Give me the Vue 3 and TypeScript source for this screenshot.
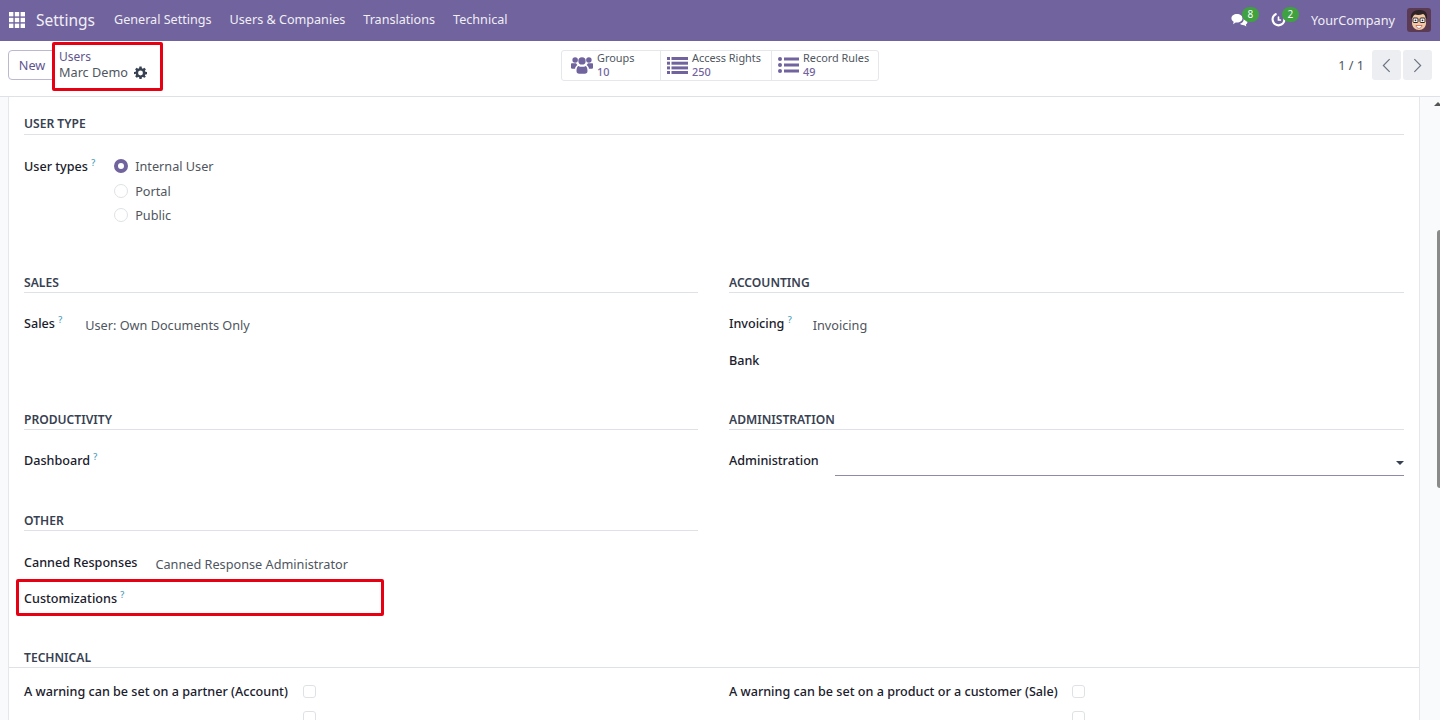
<script setup lang="ts">
const navItems = ['General Settings', 'Users & Companies', 'Translations', 'Technical'];
const userTypes = ['Internal User', 'Portal', 'Public'];
</script>

<template>
	<div class="page">
		<header class="navbar">
			<svg class="apps" viewBox="0 0 16 16" width="16" height="16">
				<g fill="#fff">
					<rect x="0" y="0" width="4.4" height="4.4" /><rect x="5.8" y="0" width="4.4" height="4.4" /><rect x="11.6" y="0" width="4.4" height="4.4" />
					<rect x="0" y="5.8" width="4.4" height="4.4" /><rect x="5.8" y="5.8" width="4.4" height="4.4" /><rect x="11.6" y="5.8" width="4.4" height="4.4" />
					<rect x="0" y="11.6" width="4.4" height="4.4" /><rect x="5.8" y="11.6" width="4.4" height="4.4" /><rect x="11.6" y="11.6" width="4.4" height="4.4" />
				</g>
			</svg>
			<span class="brand">Settings</span>
			<nav class="menu">
				<span v-for="item in navItems" :key="item">{{ item }}</span>
			</nav>
			<div class="systray">
				<div class="tray-icon chat">
					<svg viewBox="0 0 20 16" width="17" height="14">
						<path fill="#fff" d="M7 1c3.700 0 6.500 2.200 6.500 5S10.700 11 7 11l-1.500-.1L2.500 13l.6-3C1.500 9.100.5 7.700.5 6 .5 3.200 3.300 1 7 1z" />
						<path fill="#fff" d="M15 6.500c2.500.4 4.300 2 4.300 3.900 0 1.200-.7 2.300-1.800 3l.5 2.300-2.500-1.600c-2 .1-3.800-.5-4.800-1.700 2.600-.6 4.500-3 4.300-5.900z" />
					</svg>
					<span class="badge">8</span>
				</div>
				<div class="tray-icon clock">
					<svg viewBox="0 0 16 16" width="15" height="15">
						<path fill="none" stroke="#fff" stroke-width="2.400" stroke-linecap="round" d="M5 2.300A6.300 6.300 0 1 0 14.300 8" />
						<path fill="none" stroke="#fff" stroke-width="1.800" stroke-linecap="round" d="M8 5.500v3h2" />
					</svg>
					<span class="badge">2</span>
				</div>
				<span class="company">YourCompany</span>
				<svg class="avatar" viewBox="0 0 24 24" width="24" height="24">
					<rect width="24" height="24" rx="3" fill="#5b3a54" />
					<path fill="#f2c9a5" d="M5 10c0-4 3-6 7-6s7 2 7 6v5c0 4-3 7-7 7s-7-3-7-7z" />
					<path fill="#2e2326" d="M4 11c-1-6 3-9 8-9 5-.5 9 2 8 9l-1.500-1c0-2-1-3.500-2.500-4-3 1.200-6 1.200-8 .5C6.500 7.500 5.500 9 5.500 10z" />
					<g fill="#fff" stroke="#2e2326" stroke-width="1">
						<rect x="6" y="10" width="5" height="4.500" rx="1" />
						<rect x="13" y="10" width="5" height="4.500" rx="1" />
					</g>
					<circle cx="8.500" cy="12.300" r=".9" fill="#2e2326" />
					<circle cx="15.500" cy="12.300" r=".9" fill="#2e2326" />
					<path fill="#fff" stroke="#a33" stroke-width=".6" d="M9 17.500h6c-.5 2-1.700 2.800-3 2.800s-2.500-.8-3-2.800z" />
				</svg>
			</div>
		</header>

		<section class="control-panel">
			<div class="cp-left">
				<button class="btn-new">New</button>
				<div class="breadcrumb">
					<span class="crumb-link">Users</span>
					<span class="crumb-current">
						Marc Demo
						<svg viewBox="0 0 24 24" width="13" height="13">
							<path fill="#374151" fill-rule="evenodd" d="M10 1h4l.6 3.100 1.800.8L19 3.100 21.900 6l-1.800 2.600.8 1.800L24 11v4l-3.100.5-.8 1.900 1.800 2.600L19 21.900l-2.600-1.800-1.800.8L14 24h-4l-.6-3.100-1.800-.8L5 21.900 2.100 19l1.800-2.600-.8-1.900L0 15v-4l3.100-.6.800-1.800L2.100 6 5 3.100l2.600 1.800 1.800-.8zM12 8.500a4.500 4.500 0 1 0 0 9 4.500 4.500 0 0 0 0-9z" />
						</svg>
					</span>
				</div>
			</div>
			<div class="stats">
				<div class="stat stat-groups">
					<svg viewBox="0 0 24 19" width="22" height="18">
						<g fill="#71639e">
							<circle cx="4.500" cy="4" r="3" /><circle cx="19.500" cy="4" r="3" /><circle cx="12" cy="5" r="4" />
							<path d="M0 8.500c0-.6.500-1 1-1h4.500c.5 1 1 1.500 1.500 2-1.600 1-2.500 2.500-2.600 4H1c-.6 0-1-.5-1-1z" />
							<path d="M24 8.500c0-.6-.5-1-1-1h-4.500c-.5 1-1 1.500-1.500 2 1.600 1 2.500 2.500 2.600 4H23c.6 0 1-.5 1-1z" />
							<path d="M8 10.500c2 1.300 6 1.300 8 0 1.500 1 2 3 2 5.500 0 2-1 3-3 3H9c-2 0-3-1-3-3 0-2.500.5-4.500 2-5.500z" />
						</g>
					</svg>
					<div class="stat-text"><span class="stat-label">Groups</span><span class="stat-value">10</span></div>
				</div>
				<div class="stat stat-access">
					<svg viewBox="0 0 21 17" width="21" height="17">
						<g fill="#71639e">
							<rect y="0" width="3" height="3" /><rect x="4.500" y="0" width="16.500" height="3" />
							<rect y="4.700" width="3" height="3" /><rect x="4.500" y="4.700" width="16.500" height="3" />
							<rect y="9.400" width="3" height="3" /><rect x="4.500" y="9.400" width="16.500" height="3" />
							<rect y="14" width="3" height="3" /><rect x="4.500" y="14" width="16.500" height="3" />
						</g>
					</svg>
					<div class="stat-text"><span class="stat-label">Access Rights</span><span class="stat-value">250</span></div>
				</div>
				<div class="stat stat-rules">
					<svg viewBox="0 0 21 16" width="21" height="16">
						<g fill="#71639e">
							<circle cx="2" cy="2" r="2" /><rect x="6" y=".5" width="15" height="3" />
							<circle cx="2" cy="8" r="2" /><rect x="6" y="6.500" width="15" height="3" />
							<circle cx="2" cy="14" r="2" /><rect x="6" y="12.500" width="15" height="3" />
						</g>
					</svg>
					<div class="stat-text"><span class="stat-label">Record Rules</span><span class="stat-value">49</span></div>
				</div>
			</div>
			<div class="pager">
				<span class="pager-count">1 / 1</span>
				<div class="pager-btns">
					<button class="pager-btn">
						<svg viewBox="0 0 10 16" width="9" height="15"><path fill="none" stroke="#6b7280" stroke-width="1.300" d="M8.500 1 1.500 8l7 7" /></svg>
					</button>
					<button class="pager-btn">
						<svg viewBox="0 0 10 16" width="9" height="15"><path fill="none" stroke="#6b7280" stroke-width="1.300" d="m1.500 1 7 7-7 7" /></svg>
					</button>
				</div>
			</div>
		</section>

		<main class="content">
			<div class="sheet">
				<h3 class="section-title user-type-title">USER TYPE</h3>
				<div class="user-types">
					<span class="label">User types <sup class="help">?</sup></span>
					<div class="radios">
						<div v-for="(type, i) in userTypes" :key="type" class="radio-row">
							<span :class="['radio', i === 0 ? 'checked' : '']"></span>
							<span class="value">{{ type }}</span>
						</div>
					</div>
				</div>

				<div class="two-cols sales-row">
					<div class="col">
						<h3 class="section-title">SALES</h3>
						<div class="field first-field">
							<span class="label">Sales <sup class="help">?</sup></span>
							<span class="value sales-value">User: Own Documents Only</span>
						</div>
					</div>
					<div class="col">
						<h3 class="section-title">ACCOUNTING</h3>
						<div class="field first-field">
							<span class="label">Invoicing <sup class="help">?</sup></span>
							<span class="value invoicing-value">Invoicing</span>
						</div>
						<div class="field bank-field"><span class="label">Bank</span></div>
					</div>
				</div>

				<div class="two-cols productivity-row">
					<div class="col">
						<h3 class="section-title">PRODUCTIVITY</h3>
						<div class="field first-field">
							<span class="label">Dashboard <sup class="help">?</sup></span>
						</div>
					</div>
					<div class="col">
						<h3 class="section-title">ADMINISTRATION</h3>
						<div class="field first-field">
							<span class="label">Administration</span>
							<div class="select"><span class="caret"></span></div>
						</div>
					</div>
				</div>

				<div class="two-cols other-row">
					<div class="col">
						<h3 class="section-title">OTHER</h3>
						<div class="field canned-field">
							<span class="label">Canned Responses</span>
							<span class="value canned-value">Canned Response Administrator</span>
						</div>
						<div class="field custom-field">
							<span class="label">Customizations <sup class="help">?</sup></span>
							<span class="red-box custom-box"></span>
						</div>
					</div>
					<div class="col"></div>
				</div>

				<h3 class="section-title technical-title">TECHNICAL</h3>
				<div class="two-cols check-row">
					<div class="check-field">
						<span class="label check-label">A warning can be set on a partner (Account)</span>
						<span class="checkbox"></span>
					</div>
					<div class="check-field">
						<span class="label check-label">A warning can be set on a product or a customer (Sale)</span>
						<span class="checkbox"></span>
					</div>
				</div>
				<div class="two-cols check-row clipped-row">
					<div class="check-field"><span class="check-label blank"></span><span class="checkbox"></span></div>
					<div class="check-field"><span class="check-label blank"></span><span class="checkbox"></span></div>
				</div>
			</div>
			<div class="scrollbar">
				<span class="scroll-arrow"></span>
				<span class="scroll-thumb"></span>
			</div>
		</main>
	</div>
</template>

<style>
html,
body {
	margin: 0;
	overflow: hidden;
}
</style>

<style scoped>
.page {
	width: 1440px;
	height: 720px;
	overflow: hidden;
	display: flex;
	flex-direction: column;
	background: #fff;
	font-family: "Noto Sans", "Open Sans", sans-serif;
	font-size: 12.7px;
	color: #374151;
}

.navbar {
	height: 41px;
	flex: none;
	display: flex;
	align-items: center;
	box-sizing: border-box;
	padding: 0 9px 2px 9px;
	background: #71639e;
	color: #fff;
}

.brand {
	margin-left: 11px;
	font-size: 15.5px;
	opacity: 0.9;
}

.menu {
	display: flex;
	gap: 18px;
	margin-left: 19px;
	font-size: 12.6px;
	opacity: 0.9;
}

.systray {
	margin-left: auto;
	display: flex;
	align-items: center;
}

.tray-icon {
	position: relative;
	display: flex;
	align-items: center;
	height: 24px;
}

.chat {
	margin-right: 23px;
}

.clock {
	margin-right: 25px;
}

.badge {
	position: absolute;
	top: -1px;
	left: 11px;
	width: 17px;
	height: 15px;
	border-radius: 8px;
	background: #3fa140;
	font-size: 10px;
	line-height: 15px;
	text-align: center;
}

.company {
	font-size: 12.7px;
	opacity: 0.9;
}

.avatar {
	margin: 1px 0 0 12px;
}

.control-panel {
	height: 56px;
	flex: none;
	display: grid;
	grid-template-columns: 1fr auto 1fr;
	grid-template-rows: 48px;
	align-items: center;
	padding: 0 8px 7px 8px;
	border-bottom: 1px solid #dee2e6;
	box-sizing: border-box;
}

.cp-left {
	display: flex;
	align-items: center;
	height: 48px;
}

.btn-new {
	width: 48px;
	height: 30px;
	padding: 0;
	border: 1px solid #bdb8cf;
	border-radius: 4px;
	background: #fff;
	color: #5f5590;
	font: inherit;
}

.breadcrumb {
	display: flex;
	flex-direction: column;
	flex: none;
	width: 111px;
	height: 49px;
	margin: 3px 0 0 -4px;
	padding: 4px 0 0 4px;
	box-sizing: border-box;
	border: 3px solid #e60012;
	border-radius: 2px;
	background: #fff;
	line-height: 15.5px;
}

.crumb-link {
	color: #5f5590;
	font-size: 12px;
}

.crumb-current {
	display: flex;
	align-items: center;
	gap: 6px;
	color: #4f5660;
}

.stats {
	display: flex;
	height: 31px;
	border: 1px solid #e5e7eb;
	border-radius: 3px;
	box-sizing: border-box;
}

.stat {
	display: flex;
	align-items: center;
	gap: 4px;
	padding-left: 9px;
	box-sizing: border-box;
}

.stat + .stat {
	border-left: 1px solid #e5e7eb;
}

.stat-groups {
	width: 98px;
}

.stat-access {
	width: 111px;
	padding-left: 6px;
}

.stat-rules {
	width: 107px;
	padding-left: 6px;
}

.stat-text {
	display: flex;
	flex-direction: column;
	font-size: 10.9px;
	line-height: 14px;
}

.stat-label {
	color: #4f5660;
}

.stat-value {
	color: #71639e;
	font-weight: 500;
}

.pager {
	display: flex;
	align-items: center;
	justify-content: flex-end;
	gap: 8px;
}

.pager-count {
	color: #4f5660;
}

.pager-btns {
	display: flex;
	gap: 2px;
}

.pager-btn {
	display: flex;
	align-items: center;
	justify-content: center;
	width: 29px;
	height: 30px;
	padding: 0;
	border: 0;
	border-radius: 3px;
	background: #eceef1;
}

.content {
	flex: 1;
	display: flex;
	min-height: 0;
	padding-left: 8px;
	background: #f9fafb;
}

.sheet {
	width: 1412px;
	flex: none;
	box-sizing: border-box;
	padding: 0 15px;
	border-left: 1px solid #e5e7eb;
	border-right: 1px solid #e5e7eb;
	background: #fff;
}

.section-title {
	margin: 0;
	padding-bottom: 1px;
	border-bottom: 1px solid #dee2e6;
	color: #374151;
	font-size: 12.1px;
	font-weight: 600;
	line-height: 17px;
}

.user-type-title {
	margin-top: 18px;
	padding-bottom: 2px;
}

.user-types {
	display: flex;
	margin-top: 22px;
	height: 117px;
}

.label {
	margin-top: 1px;
	color: #1a202c;
	font-size: 12.6px;
	font-weight: 500;
	white-space: nowrap;
}

.help {
	color: #4b9cb8;
	font-size: 9px;
	line-height: 0;
}

.value {
	color: #4f5660;
}

.radios {
	display: flex;
	flex-direction: column;
	gap: 6.5px;
	margin-left: 19px;
}

.radio-row {
	display: flex;
	align-items: center;
	gap: 7px;
	height: 18px;
}

.radio {
	width: 14px;
	height: 14px;
	box-sizing: border-box;
	border: 1px solid #dee2e6;
	border-radius: 50%;
}

.radio.checked {
	border: 4px solid #71639e;
}

.two-cols {
	display: grid;
	grid-template-columns: 674px 675px;
	column-gap: 31px;
}

.sales-row {
	height: 137px;
}

.productivity-row {
	height: 101px;
}

.other-row {
	height: 137px;
}

.field {
	display: flex;
	align-items: flex-start;
}

.first-field {
	margin-top: 21px;
}

.sales-value,
.invoicing-value,
.canned-value {
	margin-top: 2px;
}

.sales-value {
	margin-left: 23px;
}

.invoicing-value {
	margin-left: 21px;
}

.bank-field {
	margin-top: 17px;
}

.select {
	position: relative;
	flex: 1;
	height: 25px;
	margin-left: 16px;
	box-sizing: border-box;
	border-bottom: 1px solid #8f8aa8;
}

.caret {
	position: absolute;
	right: 0;
	top: 10px;
	border-left: 4px solid transparent;
	border-right: 4px solid transparent;
	border-top: 4px solid #374151;
}

.canned-field {
	margin-top: 22px;
}

.canned-value {
	margin-left: 18px;
}

.custom-field {
	position: relative;
	margin-top: 16px;
}

.red-box {
	position: absolute;
	border: 3px solid #e60012;
	border-radius: 2px;
	box-sizing: border-box;
}

.custom-box {
	left: -8px;
	top: -10px;
	width: 368px;
	height: 37px;
}

.technical-title {
	margin: 0 -15px;
	padding: 0 15px 1px;
}

.check-row {
	margin-top: 14px;
	height: 18px;
}

.clipped-row {
	margin-top: 8px;
}

.check-field {
	display: flex;
	align-items: center;
}

.check-label {
	width: 279px;
	margin-top: 0;
}

.check-field + .check-field .check-label {
	width: 343px;
}

.blank {
	height: 18px;
}

.checkbox {
	width: 13px;
	height: 13px;
	box-sizing: border-box;
	border: 1px solid #dee2e6;
	border-radius: 3px;
}

.scrollbar {
	position: relative;
	flex: 1;
}

.scroll-arrow {
	position: absolute;
	top: 5px;
	right: -2px;
	border-left: 4px solid transparent;
	border-right: 4px solid transparent;
	border-bottom: 4px solid #555;
}

.scroll-thumb {
	position: absolute;
	top: 133px;
	right: 0;
	width: 3px;
	height: 258px;
	border-radius: 3px 0 0 3px;
	background: #8a8a8a;
}
</style>
